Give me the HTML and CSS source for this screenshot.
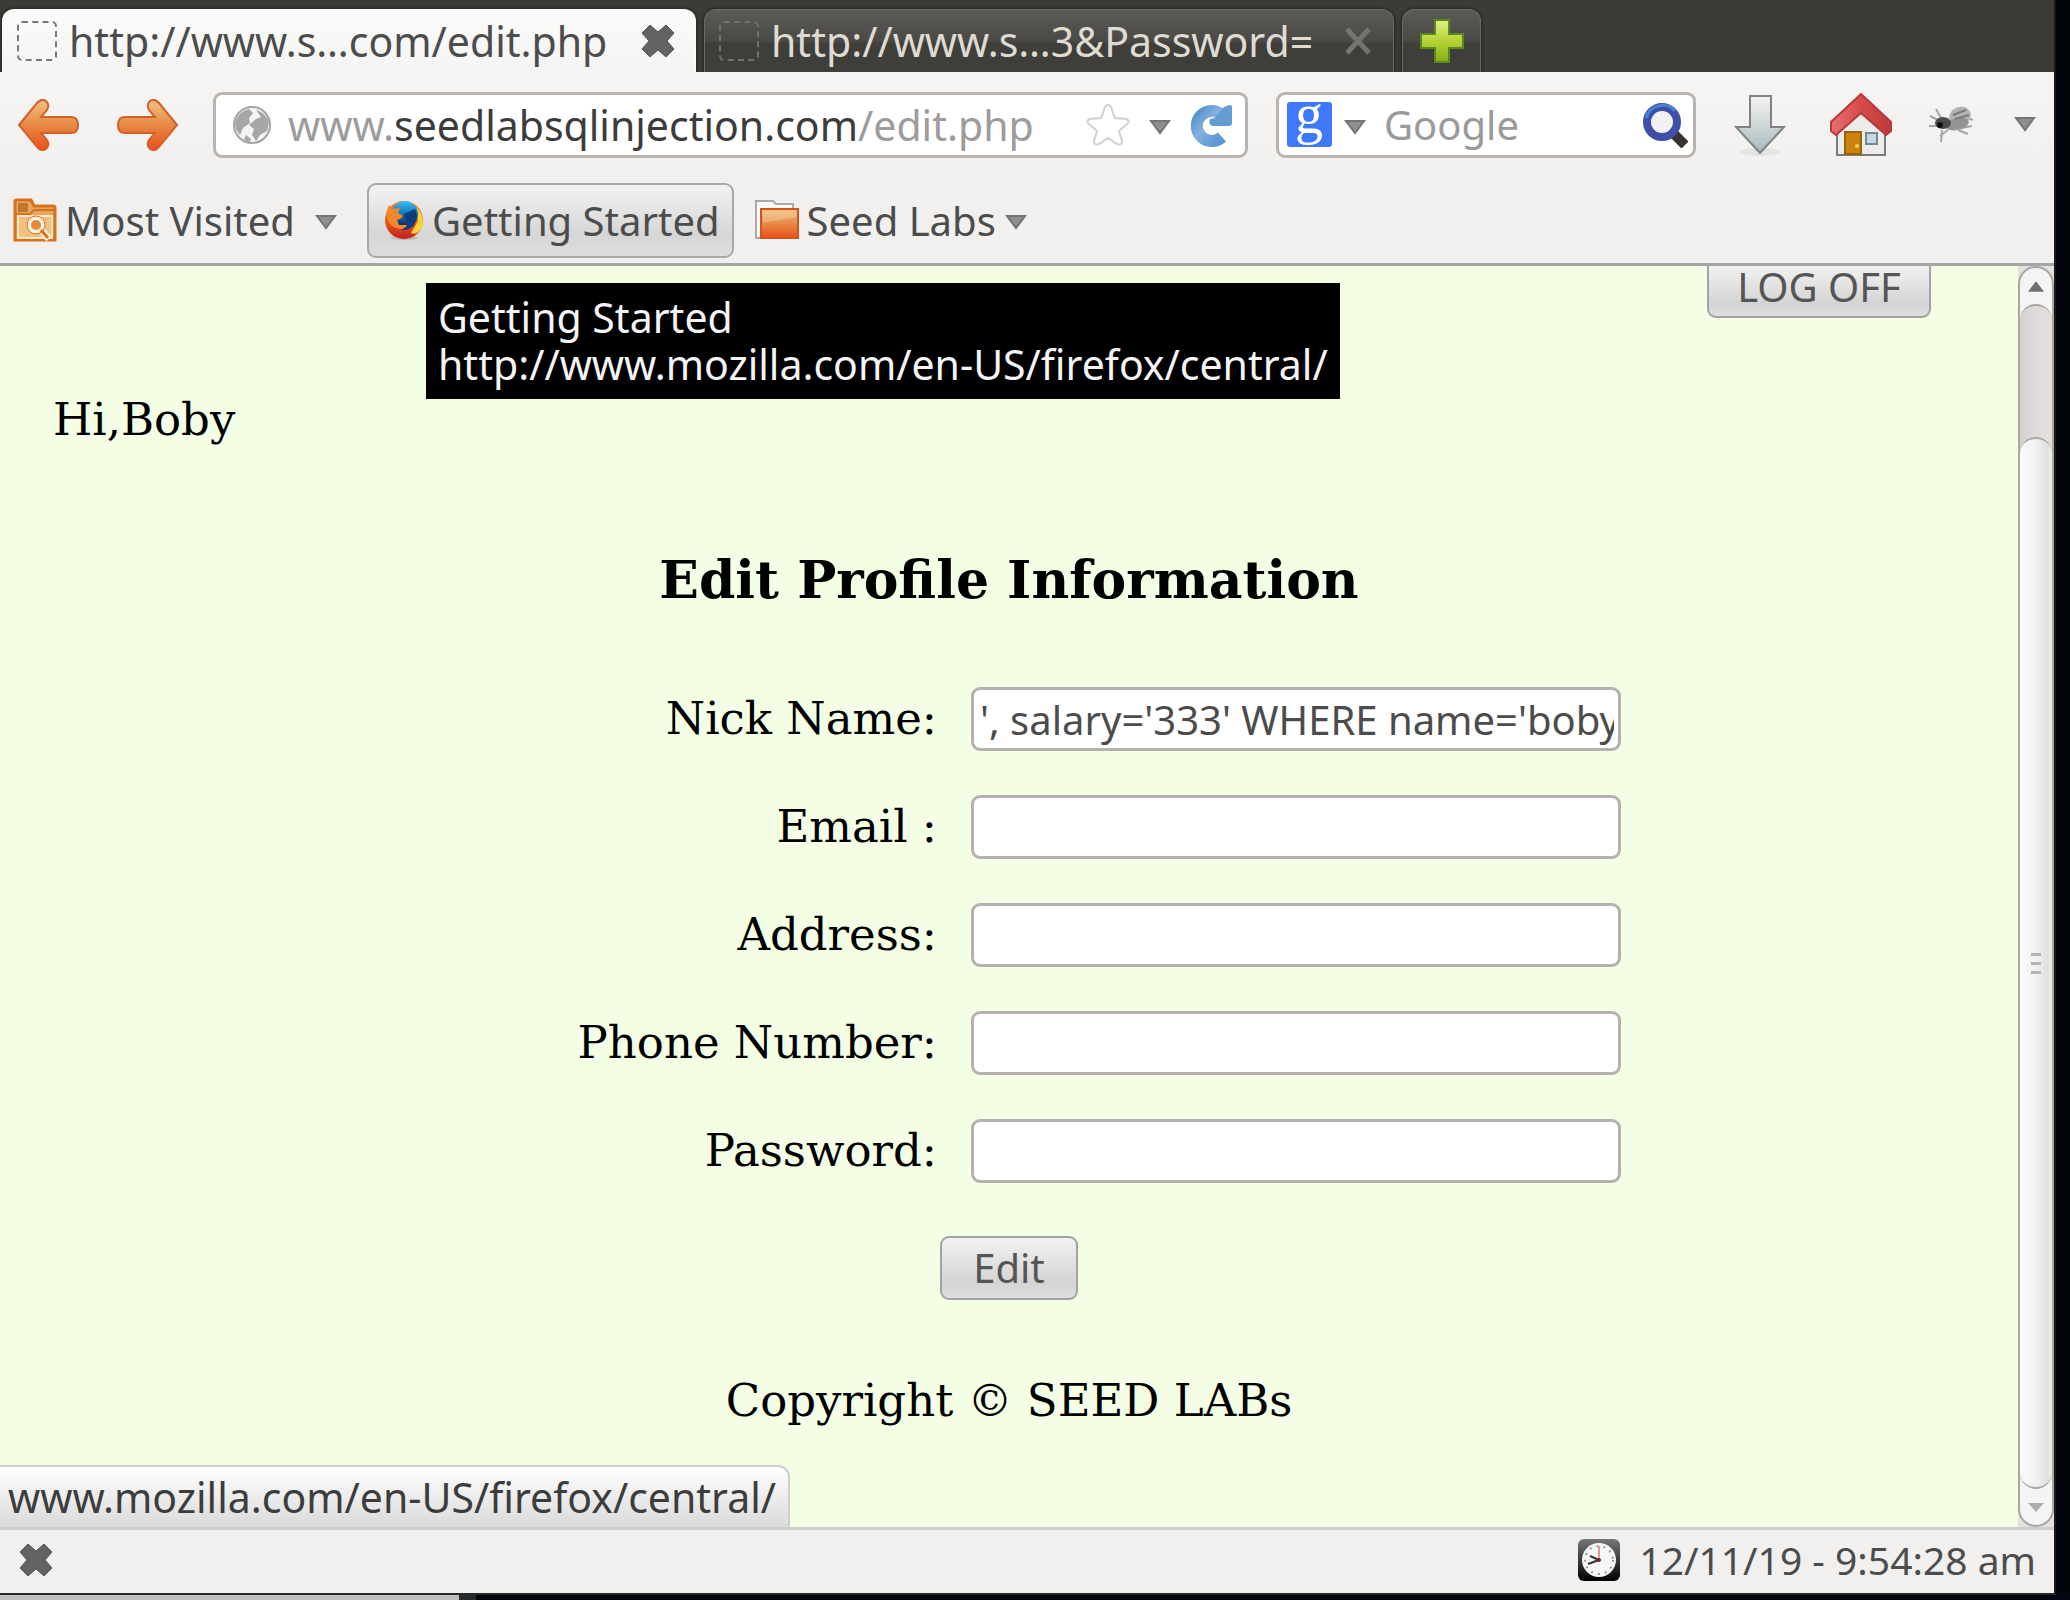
FILE: index.html
```
<!DOCTYPE html>
<html lang="en">
<head>
<meta charset="utf-8">
<title>Edit Profile</title>
<link rel="stylesheet" href="styles.css">
</head>
<body>
<svg width="0" height="0" class="defs" aria-hidden="true">
  <defs>
    <linearGradient id="orange" x1="0" y1="0" x2="0" y2="1"><stop offset="0" stop-color="#f2c283"/><stop offset=".5" stop-color="#e68a45"/><stop offset="1" stop-color="#e8501a"/></linearGradient>
    <linearGradient id="steel" x1="0" y1="0" x2="0" y2="1"><stop offset="0" stop-color="#f4f4ee"/><stop offset="1" stop-color="#a9b9c1"/></linearGradient>
    <linearGradient id="lime" x1="0" y1="0" x2="0" y2="1"><stop offset="0" stop-color="#e3f08a"/><stop offset=".5" stop-color="#b5d334"/><stop offset="1" stop-color="#86ab1c"/></linearGradient>
    <linearGradient id="blue" x1="0" y1="0" x2="1" y2="1"><stop offset="0" stop-color="#5390cb"/><stop offset=".4" stop-color="#82b1de"/><stop offset="1" stop-color="#5a96d0"/></linearGradient>
    <linearGradient id="roof" x1="0" y1="0" x2="1" y2="0"><stop offset="0" stop-color="#e87070"/><stop offset=".5" stop-color="#d84a4a"/><stop offset="1" stop-color="#bd3a3a"/></linearGradient>
    <linearGradient id="fire" x1="0" y1="0" x2="0" y2="1"><stop offset="0" stop-color="#f58220"/><stop offset=".6" stop-color="#e8501c"/><stop offset="1" stop-color="#c01f1a"/></linearGradient>
    <linearGradient id="sea" x1="0" y1="0" x2="0" y2="1"><stop offset="0" stop-color="#3cc0f0"/><stop offset=".5" stop-color="#1274b8"/><stop offset="1" stop-color="#10205a"/></linearGradient>
    <linearGradient id="clockbox" x1="0" y1="0" x2="0" y2="1"><stop offset="0" stop-color="#777"/><stop offset="1" stop-color="#000"/></linearGradient>
    <symbol id="caret" viewBox="0 0 22 15"><path d="M2 1h18L11 13z" fill="#8f8f8f" stroke="#747474" stroke-width="2"/></symbol>
    <symbol id="cross" viewBox="0 0 34 34"><path d="M9 1 17 8 25 1 33 9 26 17 33 25 25 33 17 26 9 33 1 25 8 17 1 9z" fill="#626461" stroke="#555" stroke-width="1" stroke-linejoin="round"/></symbol>
  </defs>
</svg>
<div class="desktop">
  <div class="window">
    <header class="tabbar">
      <div class="tab active">
        <span class="blank-page"></span><span class="tab-title">http://www.s…com/edit.php</span>
        <button class="icon-button" aria-label="Close tab"><svg width="34" height="34"><use href="#cross"/></svg></button>
      </div>
      <div class="tab">
        <span class="blank-page"></span><span class="tab-title">http://www.s…3&amp;Password=</span>
        <button class="icon-button" aria-label="Close tab"><svg width="30" height="30" viewBox="0 0 30 30"><path d="M4 3 26 27M26 3 4 27" stroke="#75746f" stroke-width="5"/></svg></button>
      </div>
      <button class="tab new-tab" aria-label="New tab"><svg width="46" height="46" viewBox="0 0 46 46"><path d="M16 2h14v14h14v14H30v14H16V30H2V16h14z" fill="url(#lime)" stroke="#5b8a1c" stroke-width="2"/></svg></button>
    </header>

    <nav class="navbar">
      <button class="icon-button back" aria-label="Back"><svg width="62" height="52" viewBox="0 0 62 52"><path d="M2 26 20 4Q24 -1 29 2 33 6 30 11L24 18H54Q61 18 61 26 61 34 54 34H24L30 41Q33 46 29 50 24 53 20 48z" fill="url(#orange)" stroke="#d4602a" stroke-width="2"/></svg></button>
      <button class="icon-button forward" aria-label="Forward"><svg width="62" height="52" viewBox="0 0 62 52"><path d="M60 26 42 4Q38 -1 33 2 29 6 32 11L38 18H8Q1 18 1 26 1 34 8 34H38L32 41Q29 46 33 50 38 53 42 48z" fill="url(#orange)" stroke="#d4602a" stroke-width="2"/></svg></button>
      <div class="field address">
        <svg width="40" height="40" viewBox="0 0 40 40"><circle cx="20" cy="20" r="18" fill="#f4f4f4" stroke="#a3a3a3" stroke-width="2"/><path d="M3 17Q7 6 17 4L21 8 17 13 18 18 11 23 8 30Q3 25 3 17zM24 5Q33 7 37 17L35 26 28 30 24 36 20 30 22 24 17 20 24 14 29 12zM14 30 19 34 18 37 12 35z" fill="#a6a6a6"/></svg>
        <div class="url" contenteditable="true" role="textbox" aria-label="Address" spellcheck="false">www.<b>seedlabsqlinjection.com</b>/edit.php</div>
        <button class="icon-button" aria-label="Bookmark this page"><svg width="46" height="44" viewBox="0 0 46 44"><path d="M23 2Q26 2 27 7L30 15 41 16Q46 18 42 21L34 28 37 38Q37 43 32 41L23 35 14 41Q9 43 9 38L12 28 4 21Q0 18 5 16L16 15 19 7Q20 2 23 2z" fill="#fff" stroke="#d0d0d0" stroke-width="2"/></svg></button>
        <button class="icon-button drop" aria-label="Show history"><svg width="22" height="15"><use href="#caret"/></svg></button>
        <button class="icon-button" aria-label="Reload"><svg width="44" height="44" viewBox="0 0 44 44"><path d="M33 34A15 15 0 1 1 33 12" fill="none" stroke="url(#blue)" stroke-width="12"/><path d="M35 4Q43 0 43 4V20Q43 23 40 23H24Q19 22 21 16L26 15z" fill="#639dd4"/></svg></button>
      </div>
      <div class="field search">
        <svg width="45" height="45" viewBox="0 0 45 45"><rect width="45" height="45" rx="3" fill="#3f78fb"/><text class="engine" x="22" y="31" text-anchor="middle">g</text></svg>
        <button class="icon-button drop" aria-label="Choose search engine"><svg width="22" height="15"><use href="#caret"/></svg></button>
        <input class="query" type="text" placeholder="Google" aria-label="Search">
        <button class="icon-button" aria-label="Search"><svg width="46" height="46" viewBox="0 0 46 46"><path d="M32 32 43 43" stroke="#3a332b" stroke-width="10"/><circle cx="20" cy="20" r="15" fill="#f1f1f3" stroke="#3f4ea6" stroke-width="8"/><path d="M4 16A17 17 0 0 1 33 9" fill="none" stroke="#4483d2" stroke-width="3"/></svg></button>
      </div>
      <button class="icon-button download" aria-label="Downloads"><svg width="52" height="62" viewBox="0 0 52 62"><ellipse cx="26" cy="58" rx="20" ry="4" fill="#e4e4e2"/><path d="M16 2H37V33H50L26 59 2 33H16z" fill="url(#steel)" stroke="#7d8385" stroke-width="2"/></svg></button>
      <button class="icon-button home" aria-label="Home"><svg width="62" height="64" viewBox="0 0 62 64"><path d="M7 34 31 15 55 34V62H7z" fill="#ececec" stroke="#7b7b7b" stroke-width="2"/><path d="M31 1 61 29V38L56 42 31 20 6 42 1 38V29z" fill="url(#roof)" stroke="#b43a3a" stroke-width="2"/><path d="M15 39H31V61H15z" fill="#c9830f" stroke="#9b6206" stroke-width="2"/><path d="M36 40H47V51H36z" fill="#bcdbe6" stroke="#7c8587" stroke-width="2"/><circle cx="27" cy="53" r="2" fill="#f8d64a"/></svg></button>
      <button class="icon-button fly" aria-label="Live HTTP headers"><svg width="46" height="38" viewBox="0 0 46 38"><path d="M2 10 10 14M1 20H10M8 3 13 12M14 24 13 36M20 24 12 30M33 22 44 20M30 24 40 28M40 12 45 14" stroke="#a6a6a6" stroke-width="2" fill="none"/><ellipse cx="32" cy="10" rx="11" ry="9" fill="#b3b3b3" transform="rotate(-20 32 10)"/><ellipse cx="29" cy="18" rx="12" ry="6" fill="#949494" transform="rotate(-12 29 18)"/><path d="M25 9 38 4M27 13 41 9" stroke="#7b7b7b" stroke-width="2"/><ellipse cx="15" cy="17" rx="8" ry="6" fill="#4b4b4b"/><circle cx="12" cy="19" r="3" fill="#111"/></svg></button>
      <button class="icon-button" aria-label="More tools"><svg width="22" height="15"><use href="#caret"/></svg></button>
    </nav>

    <nav class="bookmarks">
      <button class="bookmark visited"><svg width="44" height="44" viewBox="0 0 44 44"><path d="M2 42V3Q2 2 4 2H18L21 8H40Q42 8 42 10V42z" fill="#e8a55c" stroke="#d8701c" stroke-width="3"/><path d="M5 5H15V14H5z" fill="#c0762f"/><path d="M5 18H39V40H5z" fill="#f0c181" stroke="#fbe6c8" stroke-width="2"/><path d="M3 16H17L21 12H41" stroke="#d8701c" stroke-width="2" fill="none"/><path d="M29 33 36 41" stroke="#fff0dc" stroke-width="7"/><circle cx="23" cy="27" r="7" fill="#e58b3a" stroke="#fff0dc" stroke-width="4"/><path d="M28 32 35 40" stroke="#d8701c" stroke-width="3"/><circle cx="23" cy="27" r="9" fill="none" stroke="#d8701c"/></svg>Most Visited<svg class="menu-caret" width="22" height="15"><use href="#caret"/></svg></button>
      <div class="bookmark-holder">
        <a class="bookmark hovered" href="#"><svg width="40" height="42" viewBox="0 0 40 42"><ellipse cx="20" cy="39" rx="14" ry="2" fill="#c3bcb8"/><circle cx="20" cy="21" r="19" fill="url(#fire)"/><path d="M28 5Q42 14 38 28 33 37 27 34L34 22z" fill="#fbd335"/><circle cx="21" cy="15" r="13" fill="url(#sea)"/><path d="M33 16Q33 28 22 31 14 31 12 25 20 27 24 22 20 19 20 15L31 10z" fill="#123a74"/><path d="M2 14 5 6 9 10 16 9 14 14 19 17 16 20 13 21 15 26 23 26Q20 32 12 29 3 26 2 14z" fill="#f4872a"/></svg>Getting Started</a>
        <div class="tooltip" role="tooltip">Getting Started<br>http://www.mozilla.com/en-US/firefox/central/</div>
      </div>
      <button class="bookmark folder"><svg width="44" height="42" viewBox="0 0 44 42"><path d="M1 39V2H18L21 5H38V39z" fill="#fafafa" stroke="#a9a9a9" stroke-width="2"/><rect x="6" y="10" width="37" height="29" fill="url(#orange)" stroke="#d5541c" stroke-width="2"/><path d="M8 24 41 18V12H8z" fill="#f4c99a" opacity=".5"/></svg>Seed Labs<svg class="menu-caret" width="22" height="15"><use href="#caret"/></svg></button>
    </nav>

    <div class="viewport">
      <main class="page">
        <div class="topline"><button class="push logoff">LOG OFF</button></div>
        <p class="greeting">Hi,Boby</p>
        <h1 class="title">Edit Profile Information</h1>
        <form class="profile">
          <div class="row"><label for="nick">Nick Name:</label><input id="nick" type="text" value="', salary='333' WHERE name='boby"></div>
          <div class="row"><label for="email">Email :</label><input id="email" type="text"></div>
          <div class="row"><label for="address">Address:</label><input id="address" type="text"></div>
          <div class="row"><label for="phone">Phone Number:</label><input id="phone" type="text"></div>
          <div class="row"><label for="password">Password:</label><input id="password" type="password"></div>
          <button class="push edit" type="button">Edit</button>
        </form>
        <p class="copyright">Copyright © SEED LABs</p>
      </main>
      <div class="scrollbar" aria-hidden="true">
        <div class="step"><svg width="16" height="11" viewBox="0 0 18 12"><path d="M9 0 18 12H0z" fill="#6f6f6f"/></svg></div>
        <div class="trough"></div>
        <div class="thumb"><i></i><i></i><i></i></div>
        <div class="step"><svg width="16" height="9" viewBox="0 0 16 9"><path d="M0 0H16L8 9z" fill="#acacac"/></svg></div>
      </div>
      <div class="link-status">www.mozilla.com/en-US/firefox/central/</div>
    </div>

    <footer class="addonbar">
      <button class="icon-button" aria-label="Close add-on bar"><svg width="34" height="34"><use href="#cross"/></svg></button>
      <div class="clock"><svg width="44" height="44" viewBox="0 0 44 44"><rect x="1" y="1" width="42" height="42" rx="6" fill="url(#clockbox)"/><circle cx="22" cy="22" r="17" fill="#f6f6f6"/><circle cx="22" cy="22" r="14" fill="none" stroke="#999" stroke-width="2" stroke-dasharray="2 5"/><path d="M22 22V8" stroke="#d99a9a" stroke-width="2"/><path d="M22 22 11 26M22 22 13 18" stroke="#333" stroke-width="2"/><circle cx="22" cy="22" r="2" fill="#7a2020"/></svg>12/11/19 - 9:54:28 am</div>
    </footer>
  </div>
  <div class="taskbar"></div>
</div>
</body>
</html>
```
FILE: styles.css
```
* { box-sizing: border-box; }

body {
  margin: 0;
  background: #02060a;
  color: #4c4c4c;
  font-family: "Noto Sans", "Open Sans", sans-serif;
  font-size: 40px;
}

button, input { font: inherit; color: inherit; }
svg { display: block; flex: none; }
.defs { position: absolute; }

.desktop {
  display: flex;
  flex-direction: column;
  min-height: 100vh;
}

.window {
  flex: 1;
  display: flex;
  flex-direction: column;
  margin-right: 14px;
  border-right: 2px solid #16191a;
  border-bottom: 2px solid #26282c;
  background: #f1f0ee;
}

.icon-button {
  display: flex;
  padding: 0;
  border: 0;
  background: none;
}

/* Tabs */
.tabbar {
  display: flex;
  gap: 8px;
  height: 72px;
  padding: 9px 2px 0;
  background: #3c3b37;
}

.tab {
  display: flex;
  align-items: center;
  width: 690px;
  padding: 0 20px 0 14px;
  border: 1px solid #6b6a66;
  border-bottom: 0;
  border-radius: 12px 12px 0 0;
  background: linear-gradient(#5b5a56, #4a4945 50%, #3f3e3a 55%, #3f3e3a);
  box-shadow: 0 0 3px 1px #262522;
  clip-path: inset(-4px -4px 0);
  color: #dfdbd2;
  font-size: 41px;
}

.tab.active {
  width: 694px;
  border-color: #fbfbfa;
  background: linear-gradient(#fbfbfa, #f4f4f2);
  color: #4c4c4c;
}

.tab-title { flex: 1; white-space: nowrap; }

.blank-page {
  width: 40px;
  height: 40px;
  margin-right: 12px;
  border: 2px dashed #777;
  border-radius: 5px;
}

.tab:not(.active) .blank-page { border-color: #72716d; }

.new-tab {
  justify-content: center;
  width: 79px;
  padding: 0;
}

/* Navigation toolbar */
.navbar {
  display: flex;
  align-items: center;
  height: 105px;
  padding: 0 18px 0 17px;
  background: linear-gradient(#f6f5f4, #f1f0ee);
}

.back { margin-right: 38px; }
.forward { margin-right: 34px; }
.download { margin: 0 44px 0 38px; }
.fly { margin: 0 40px 0 36px; }

.field {
  display: flex;
  align-items: center;
  height: 66px;
  border: 3px solid #b9b5ae;
  border-radius: 9px;
  background: #fff;
}

.address {
  flex: 1;
  padding: 0 12px 0 16px;
  margin-right: 28px;
}

.url {
  flex: 1;
  margin-left: 16px;
  color: #9d9c9b;
  font-size: 41px;
  line-height: 60px;
  white-space: nowrap;
}

.url b { color: #3c3c3c; font-weight: 400; }

.address .drop { margin: 6px 18px 0; }

.search { width: 420px; padding: 0 5px 0 8px; }
.search .drop { margin: 6px 18px 0 12px; }
.engine { fill: #fff; font: 56px "Liberation Serif", serif; }

.query {
  flex: 1;
  min-width: 0;
  padding: 0;
  border: 0;
  background: none;
}

.query::placeholder { color: #9a9a9a; opacity: 1; }

/* Bookmarks toolbar */
.bookmarks {
  display: flex;
  align-items: center;
  height: 89px;
  padding: 0 13px;
  border-bottom: 3px solid #a5a5a3;
}

.bookmark {
  display: flex;
  align-items: center;
  gap: 8px;
  height: 75px;
  padding: 0;
  border: 0;
  background: none;
  color: #4c4c4c;
  text-decoration: none;
  white-space: nowrap;
}

.menu-caret { margin: 4px 0 0 auto; }
.visited { width: 324px; margin-right: 30px; }
.folder { width: 272px; margin-left: 21px; }
.bookmark-holder { position: relative; }

.hovered {
  padding: 0 12px 0 15px;
  border: 2px solid #a8a8a8;
  border-radius: 9px;
  background: linear-gradient(#f3f3f3, #d6d6d6 70%, #dedede);
}

.tooltip {
  position: absolute;
  z-index: 2;
  top: 100px;
  left: 59px;
  padding: 11px 12px;
  background: #000;
  color: #f4f4f4;
  font-size: 41px;
  line-height: 47px;
  white-space: nowrap;
}

/* Page */
.viewport {
  position: relative;
  flex: 1;
  display: flex;
}

.page {
  flex: 1;
  background: #f3fee4;
  color: #000;
  font-family: "DejaVu Serif", serif;
  font-size: 45px;
  line-height: 52px;
}

.push {
  border: 2px solid #a3a3a3;
  border-radius: 9px;
  background: linear-gradient(#f2f2f2, #d4d4d4 75%, #dfdfdf);
  color: #555;
  font-family: "Noto Sans", "Open Sans", sans-serif;
  font-size: 40px;
  line-height: 40px;
}

.topline {
  display: flex;
  justify-content: flex-end;
  padding-right: 87px;
}

.logoff {
  width: 224px;
  height: 52px;
  padding: 0 0 8px;
  border-top: 0;
  border-radius: 0 0 9px 9px;
}

.greeting { margin: 76px 0 0 53px; }

.title {
  margin: 104px 0 0;
  font-size: 52px;
  line-height: 60px;
  text-align: center;
}

.profile { margin-top: 55px; }

.row {
  display: flex;
  align-items: center;
  justify-content: center;
  gap: 34px;
  height: 108px;
}

.row label { width: 540px; text-align: right; }

.row input {
  width: 650px;
  height: 64px;
  padding: 0 4px 0 6px;
  border: 3px solid #b5b1ac;
  border-radius: 9px;
  background: #fff;
  color: #4c4c4c;
  font-family: "Noto Sans", "Open Sans", sans-serif;
  font-size: 40px;
}

.edit {
  display: block;
  width: 138px;
  height: 64px;
  margin: 31px auto 0;
  padding: 0;
}

.copyright {
  margin: 75px 0 0;
  text-align: center;
}

.scrollbar {
  display: flex;
  flex-direction: column;
  width: 36px;
  border: 2px solid #aaa6a3;
  border-radius: 18px;
  background: #f4f4f4;
  box-shadow: 0 0 0 18px #e4e2e0;
  clip-path: inset(0);
}

.step {
  display: flex;
  align-items: center;
  justify-content: center;
  height: 36px;
}

.trough {
  flex: 148 0 0;
  border-top: 2px solid #aaa6a3;
  border-radius: 16px 16px 0 0;
  background: linear-gradient(90deg, #d5d1cf, #dedad9 40%, #e2e1df);
}

.thumb {
  flex: 1040 0 0;
  display: flex;
  flex-direction: column;
  align-items: center;
  justify-content: center;
  gap: 6px;
  margin-top: -18px;
  border: 2px solid #aaa6a3;
  border-width: 2px 0;
  border-radius: 16px;
  background: linear-gradient(90deg, #fbfafb, #f4f2f3 45%, #e1e0dd 85%, #f0f0ee);
}

.thumb i { width: 10px; height: 3px; background: #b5b4b1; }

.link-status {
  position: absolute;
  bottom: 0;
  left: 0;
  height: 62px;
  padding: 0 12px 0 8px;
  border: 2px solid #cfcfcf;
  border-width: 2px 2px 0 0;
  border-radius: 0 12px 0 0;
  background: linear-gradient(#fff, #dadada);
  color: #3c3c3c;
  font-size: 41px;
  line-height: 60px;
  white-space: nowrap;
}

.addonbar {
  display: flex;
  align-items: center;
  justify-content: space-between;
  height: 66px;
  padding: 0 18px 4px 19px;
  border-top: 3px solid #cfcdcb;
}

.clock {
  display: flex;
  align-items: center;
  gap: 18px;
  font-size: 39px;
}

/* Edge of the desktop seen under the window */
.taskbar {
  height: 5px;
  background: linear-gradient(90deg, #bfbdbe 459px, #262a2b 459px, #262a2b 476px, #02060e 476px);
}
```
